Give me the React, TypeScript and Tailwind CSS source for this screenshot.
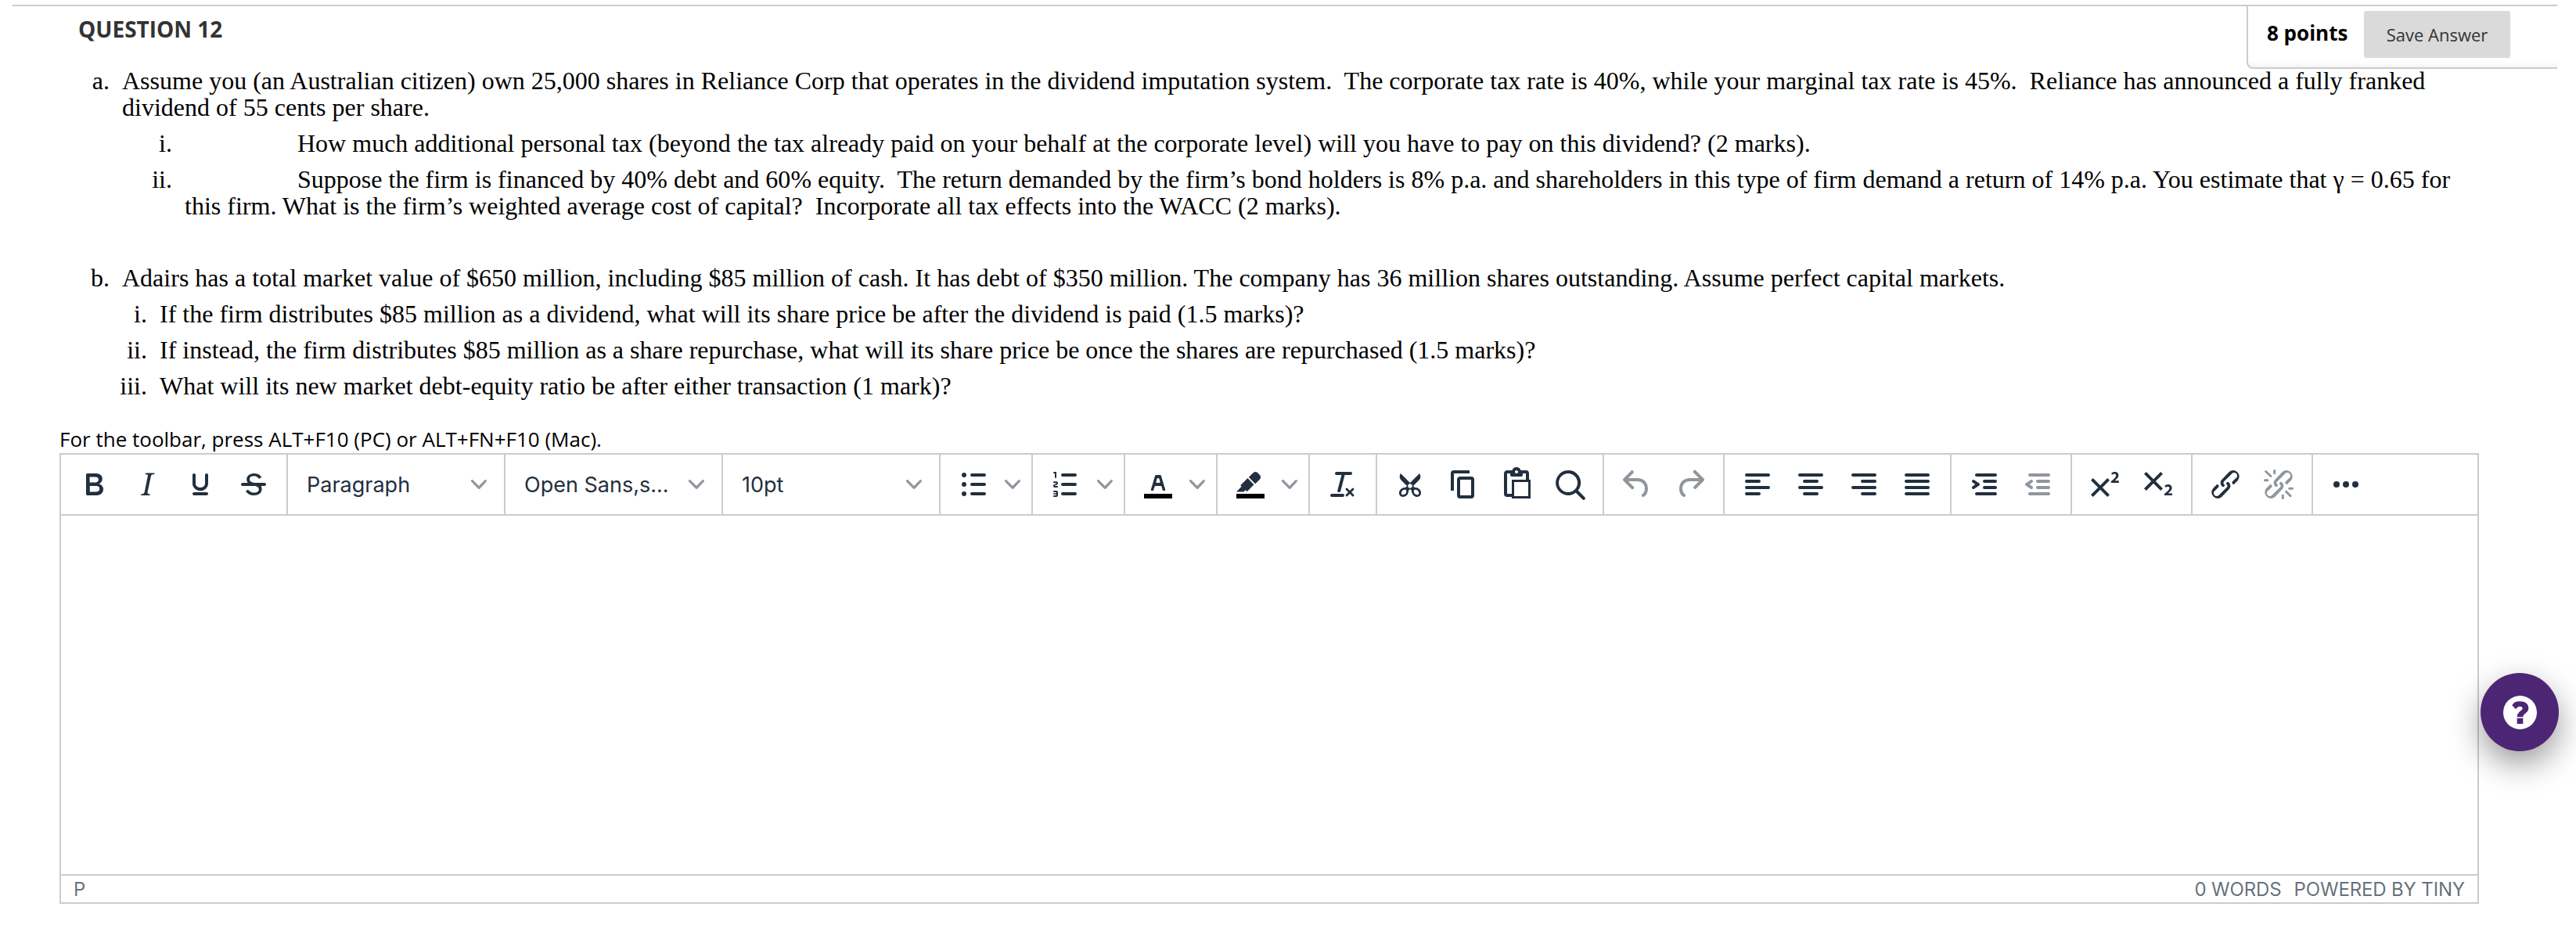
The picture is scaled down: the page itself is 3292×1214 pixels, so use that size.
import { ReactNode } from "react";
import clsx from "clsx";

const LINK =
  "M6.2 12.3a1 1 0 0 1 1.4 1.4l-2 2a2 2 0 1 0 2.6 2.8l4.8-4.8a1 1 0 0 0 0-1.4 1 1 0 1 1 1.4-1.3 2.9 2.9 0 0 1 0 4L9.6 20a3.9 3.9 0 0 1-5.5-5.5l2-2Zm11.6-.6a1 1 0 0 1-1.4-1.4l2-2a2 2 0 1 0-2.6-2.8L11 10.3a1 1 0 0 0 0 1.4A1 1 0 1 1 9.6 13a2.9 2.9 0 0 1 0-4L14.4 4a3.9 3.9 0 0 1 5.5 5.5l-2 2Z";

// Filled icon outlines on a 24x24 grid
const ICONS = {
  bold: "M7.8 19c-.3 0-.5 0-.6-.2l-.2-.5V5.7c0-.2 0-.4.2-.5l.6-.2h5c1.5 0 2.7.3 3.5 1 .7.6 1.1 1.4 1.1 2.5a3 3 0 0 1-.6 1.9c-.4.6-1 1-1.6 1.2.4.1.9.3 1.3.6s.8.7 1 1.2c.4.4.5 1 .5 1.6 0 1.3-.4 2.3-1.3 3-.8.7-2.1 1-3.8 1H7.8Zm5-8.3c.6 0 1.2-.1 1.6-.5.4-.3.6-.7.6-1.3 0-1.1-.8-1.7-2.3-1.7H9.3v3.5h3.4Zm.5 6c.7 0 1.3-.1 1.7-.4.4-.4.6-.9.6-1.5s-.2-1-.7-1.4c-.4-.3-1-.4-2-.4H9.4v3.8h4Z",
  italic:
    "m16.7 4.7-.1.9h-.3c-.6 0-1 0-1.4.3-.3.3-.4.6-.5 1.1l-2.1 9.8v.6c0 .5.4.8 1.4.8h.2l-.2.8H8l.2-.8h.2c1.1 0 1.8-.5 2-1.5l2-9.8.1-.5c0-.6-.4-.8-1.4-.8h-.3l.2-.9h5.8Z",
  underline:
    "M16 5c.6 0 1 .4 1 1v5.5a4 4 0 0 1-.4 1.8l-1 1.4a5.3 5.3 0 0 1-5.5 1 5 5 0 0 1-1.6-1c-.5-.4-.8-.9-1.1-1.4a4 4 0 0 1-.4-1.8V6c0-.6.4-1 1-1s1 .4 1 1v5.5c0 .3 0 .6.2 1l.6.7a3.3 3.3 0 0 0 2.2.8 3.4 3.4 0 0 0 2.2-.8c.3-.2.4-.5.6-.8l.2-.9V6c0-.6.4-1 1-1ZM8 17h8c.6 0 1 .4 1 1s-.4 1-1 1H8a1 1 0 0 1 0-2Z",
  strike:
    "M15.6 8.5c-.5-.7-1-1.1-1.3-1.3-.6-.4-1.3-.6-2-.6-2.7 0-2.8 1.7-2.8 2.1 0 1.6 1.8 2 3.2 2.3 4.4.9 4.6 2.8 4.6 3.9 0 1.4-.7 4.1-5 4.1A6.2 6.2 0 0 1 7 16.4l1.5-1.1c.4.6 1.6 2 3.7 2 1.6 0 2.5-.4 3-1.2.4-.8.3-2-.8-2.6-.7-.4-1.6-.7-2.9-1-1-.2-3.9-.8-3.9-3.6C7.6 6 10.3 5 12.4 5c2.9 0 4.2 1.6 4.7 2.4l-1.5 1.1Z",
  numbers:
    "M6 4v3.5c0 .3-.2.5-.5.5a.5.5 0 0 1-.5-.5V5h-.5a.5.5 0 0 1 0-1H6Zm-1 8.8.2.2h1.3c.3 0 .5.2.5.5s-.2.5-.5.5H4.9a1 1 0 0 1-.9-1V13c0-.4.3-.8.6-1l1.2-.4.2-.3a.2.2 0 0 0-.2-.2H4.5a.5.5 0 0 1-.5-.5c0-.3.2-.5.5-.5h1.6c.5 0 .9.4.9 1v.1c0 .4-.3.8-.6 1l-1.2.4-.2.3ZM7 17v2c0 .6-.4 1-1 1H4.5a.5.5 0 0 1 0-1h1.2c.2 0 .3-.1.3-.3 0-.2-.1-.3-.3-.3H4.4a.4.4 0 1 1 0-.8h1.3c.2 0 .3-.1.3-.3 0-.2-.1-.3-.3-.3H4.5a.5.5 0 1 1 0-1H6c.6 0 1 .4 1 1Z",
  textColor:
    "M8.7 16h-.8a.5.5 0 0 1-.5-.6l2.7-9c.1-.3.3-.4.5-.4h2.8c.2 0 .4.1.5.4l2.7 9a.5.5 0 0 1-.5.6h-.8a.5.5 0 0 1-.4-.4l-.7-2.2c0-.3-.3-.4-.5-.4h-3.4c-.2 0-.4.1-.5.4l-.7 2.2c0 .3-.2.4-.4.4Zm2.6-7.6-.6 2a.5.5 0 0 0 .5.6h1.6a.5.5 0 0 0 .5-.6l-.6-2c0-.3-.3-.4-.5-.4h-.4c-.2 0-.4.1-.5.4Z",
  highlight:
    "M7.7 16.7H3l3.3-3.3-.7-.8L10.2 8l4 4.1-4 4.2c-.2.2-.6.2-.8 0l-.6-.7-1.1 1.1ZM10.9 7.4l3-2.9a2 2 0 0 1 2.6 0L18 6c.7.7.7 2 0 2.7l-2.9 2.9-4.2-4.2Z",
  removeFormat:
    "M13.2 6a1 1 0 0 1 0 .2l-2.6 10a1 1 0 0 1-1 .8h-.2a.8.8 0 0 1-.8-1l2.6-10H8a1 1 0 1 1 0-2h9a1 1 0 0 1 0 2h-3.8ZM5 18h7a1 1 0 0 1 0 2H5a1 1 0 0 1 0-2Zm13 1.5L16.5 18 15 19.5a.7.7 0 0 1-1-1l1.5-1.5-1.5-1.5a.7.7 0 0 1 1-1l1.5 1.5 1.5-1.5a.7.7 0 0 1 1 1L17.5 17l1.5 1.5a.7.7 0 0 1-1 1Z",
  cut: "M18 15c.6.7 1 1.4 1 2.3 0 .8-.2 1.5-.7 2l-.8.5-1 .2c-.4 0-.8 0-1.2-.3a3.9 3.9 0 0 1-2.1-2.2c-.2-.5-.3-1-.2-1.5l-1-1-1 1c0 .5 0 1-.2 1.5-.1.5-.4 1-.9 1.4-.3.4-.7.6-1.2.8l-1.2.3c-.4 0-.7 0-1-.2-.3 0-.6-.3-.8-.5-.5-.5-.8-1.2-.7-2 0-.9.4-1.6 1-2.2A3.7 3.7 0 0 1 8.6 14H9l1-1-4-4-.5-1a3.3 3.3 0 0 1 0-2c0-.4.3-.7.5-1l6 6 6-6 .5 1a3.3 3.3 0 0 1 0 2c0 .4-.3.7-.5 1l-4 4 1 1h.5c.4 0 .8 0 1.2.3.5.2.9.4 1.2.8ZM9.5 17.2l.1-.4v-.7a1 1 0 0 0-.2-.5 1 1 0 0 0-.4-.2 1.6 1.6 0 0 0-.8 0 2.6 2.6 0 0 0-.8.3 2.5 2.5 0 0 0-.9 1.1l-.1.4v.7l.2.5.5.2h.7a2.5 2.5 0 0 0 .8-.3 2.8 2.8 0 0 0 1-1ZM12 14.4c.4 0 .7-.1 1-.4.3-.3.4-.6.4-1s-.1-.7-.4-1c-.3-.3-.6-.4-1-.4s-.7.1-1 .4c-.3.3-.4.6-.4 1s.1.7.4 1c.3.3.6.4 1 .4ZM14.5 17.2l-.1-.4v-.7a1 1 0 0 1 .2-.5 1 1 0 0 1 .4-.2 1.6 1.6 0 0 1 .8 0 2.6 2.6 0 0 1 .8.3 2.5 2.5 0 0 1 .9 1.1l.1.4v.7l-.2.5-.5.2h-.7a2.5 2.5 0 0 1-.8-.3 2.8 2.8 0 0 1-1-1Z",
  copy: "M16 3H6a2 2 0 0 0-2 2v11h2V5h10V3Zm1 4a2 2 0 0 1 2 2v10a2 2 0 0 1-2 2h-7a2 2 0 0 1-2-2V9c0-1.2.9-2 2-2h7Zm0 12V9h-7v10h7Z",
  paste:
    "M18 9V5h-2v1c0 .6-.4 1-1 1H9a1 1 0 0 1-1-1V5H6v13h3V9h9ZM9 20H6a2 2 0 0 1-2-2V5c0-1.1.9-2 2-2h3.2A3 3 0 0 1 12 1a3 3 0 0 1 2.8 2H18a2 2 0 0 1 2 2v4h1v12H9v-1Zm1.5-9.5v9h9v-9h-9ZM12 3a1 1 0 0 0-1 1c0 .5.4 1 1 1s1-.5 1-1-.4-1-1-1Z",
  search:
    "M16 17.3a8 8 0 1 1 1.4-1.4l4.3 4.4a1 1 0 0 1-1.4 1.4l-4.4-4.3Zm-5-.3a6 6 0 1 0 0-12 6 6 0 0 0 0 12Z",
  undo: "M6.4 8H12c3.7 0 6.2 2 6.8 5.1.6 2.7-.4 5.6-2.3 6.8a1 1 0 0 1-1-1.8c1.1-.6 1.8-2.7 1.4-4.6-.5-2.1-2.1-3.5-4.9-3.5H6.4l3.3 3.3a1 1 0 1 1-1.4 1.4l-5-5a1 1 0 0 1 0-1.4l5-5a1 1 0 0 1 1.4 1.4L6.4 8Z",
  redo: "M17.6 10H12c-2.8 0-4.4 1.4-4.9 3.5-.4 2 .3 4 1.4 4.6a1 1 0 1 1-1 1.8c-2-1.2-2.9-4.1-2.3-6.8.6-3 3-5.1 6.8-5.1h5.6l-3.3-3.3a1 1 0 1 1 1.4-1.4l5 5a1 1 0 0 1 0 1.4l-5 5a1 1 0 0 1-1.4-1.4l3.3-3.3Z",
  indent: "M4.4 13.2 6.2 12l-1.8-1.2a1 1 0 0 1 1.2-1.6l3 2a1 1 0 0 1 0 1.6l-3 2a1 1 0 1 1-1.2-1.6Z",
  outdent: "M8.6 13.2a1 1 0 0 1-1.2 1.6l-3-2a1 1 0 0 1 0-1.6l3-2a1 1 0 0 1 1.2 1.6L6.8 12l1.8 1.2Z",
  superscript:
    "M15 9.4 10.4 14l4.6 4.6-1.4 1.4L9 15.4 4.4 20 3 18.6 7.6 14 3 9.4 4.4 8 9 12.6 13.6 8 15 9.4Zm5.9 1.6h-5v-1l1-.8 1.7-1.6c.3-.5.5-.9.5-1.3 0-.3 0-.5-.2-.7-.2-.2-.5-.3-.9-.3l-.8.2-.7.4-.4-1.2c.2-.2.5-.4 1-.5.3-.2.8-.2 1.2-.2.8 0 1.4.2 1.8.6.4.4.6 1 .6 1.6 0 .5-.2 1-.5 1.5l-1.3 1.4-.6.5h2.6V11Z",
  subscript:
    "m10.4 10 4.6 4.6-1.4 1.4L9 11.4 4.4 16 3 14.6 7.6 10 3 5.4 4.4 4 9 8.6 13.6 4 15 5.4 10.4 10ZM21 19h-5v-1l1-.8 1.7-1.6c.3-.4.5-.8.5-1.2 0-.3 0-.6-.2-.7-.2-.2-.5-.3-.9-.3a2 2 0 0 0-.8.2l-.7.3-.4-1.1 1-.6 1.2-.2c.8 0 1.4.3 1.8.7.4.4.6.9.6 1.5s-.2 1.1-.5 1.6a8 8 0 0 1-1.3 1.3l-.6.6h2.6V19Z",
  link: LINK,
  unlink:
    LINK +
    "M7.6 6.3a.8.8 0 0 1-1 1.1L3.3 4.2a.7.7 0 1 1 1-1l3.2 3.1ZM5.1 8.6a.8.8 0 0 1 0 1.5H3a.8.8 0 0 1 0-1.5h2Zm5-3.5a.8.8 0 0 1-1.5 0V3a.8.8 0 0 1 1.5 0v2Zm6 11.8a.8.8 0 0 1 1-1l3.2 3.2a.8.8 0 0 1-1 1L16 17Zm-2.2 2a.8.8 0 0 1 1.5 0V21a.8.8 0 0 1-1.5 0V19Zm5-3.5a.7.7 0 1 1 0-1.5H21a.8.8 0 0 1 0 1.5h-2Z",
  more: "M6 10a2 2 0 1 0 0 4 2 2 0 0 0 0-4Zm6 0a2 2 0 1 0 0 4 2 2 0 0 0 0-4Zm6 0a2 2 0 1 0 0 4 2 2 0 0 0 0-4Z",
  bullets:
    "M6 4.5a1.5 1.5 0 1 0 0 3 1.5 1.5 0 0 0 0-3Zm0 6a1.5 1.5 0 1 0 0 3 1.5 1.5 0 0 0 0-3Zm0 6a1.5 1.5 0 1 0 0 3 1.5 1.5 0 0 0 0-3Z",
};

interface IconProps {
  name?: keyof typeof ICONS;
  // Round-capped rules, drawn as strokes
  lines?: string;
  // Colour swatch under the glyph
  swatch?: boolean;
}

function Icon({ name, lines, swatch }: IconProps) {
  return (
    <svg className="w-12 h-12 shrink-0" viewBox="0 0 24 24" fill="currentColor">
      {swatch && <path d="M3 18h18v3H3z" fill="#000" />}
      {name && <path fillRule="evenodd" d={ICONS[name]} />}
      {lines && <path d={lines} fill="none" stroke="currentColor" strokeWidth={2} strokeLinecap="round" />}
    </svg>
  );
}

function Chevron() {
  return (
    <svg className="w-5 h-5 shrink-0 opacity-50" viewBox="0 0 10 10" fill="currentColor">
      <path d="M8.7 2.2c.3-.3.8-.3 1 0 .4.4.4.9 0 1.2L5.7 7.8c-.3.3-.9.3-1.2 0L.2 3.4a.8.8 0 0 1 0-1.2c.3-.3.8-.3 1.1 0L5 6l3.7-3.8Z" />
    </svg>
  );
}

function Group({ children, last }: { children: ReactNode; last?: boolean }) {
  return (
    <div className={clsx("flex items-center px-2", !last && "border-r-2 border-[#ccc]")}>{children}</div>
  );
}

function ToolButton({ title, disabled, ...icon }: IconProps & { title: string; disabled?: boolean }) {
  return (
    <button
      title={title}
      disabled={disabled}
      className={clsx("w-[68px] h-[68px] flex items-center justify-center", disabled && "opacity-50")}
    >
      <Icon {...icon} />
    </button>
  );
}

function SplitButton({ title, ...icon }: IconProps & { title: string }) {
  return (
    <div className="flex items-center">
      <ToolButton title={title} {...icon} />
      <button className="w-8 h-[68px] flex items-center justify-center">
        <Chevron />
      </button>
    </div>
  );
}

function Select({ label }: { label: string }) {
  return (
    <button className="w-[260px] h-[68px] pl-4 pr-[14px] flex items-center justify-between text-[27px]">
      <span className="pt-0.5">{label}</span>
      <Chevron />
    </button>
  );
}

function Item({ marker, children, nested }: { marker: string; children: ReactNode; nested?: "wide" | "narrow" }) {
  return (
    <li className={clsx("flex", nested === "wide" && "pl-20", nested === "narrow" && "pl-12")}>
      <span className="w-16 mr-4 shrink-0 text-right">{marker}</span>
      <p className="whitespace-nowrap">{children}</p>
    </li>
  );
}

function Toolbar() {
  return (
    <div className="flex h-[78px] border-b-2 border-[#ccc]">
      <Group>
        <ToolButton title="Bold" name="bold" />
        <ToolButton title="Italic" name="italic" />
        <ToolButton title="Underline" name="underline" />
        <ToolButton title="Strikethrough" name="strike" lines="M5 12h14" />
      </Group>
      <Group>
        <Select label="Paragraph" />
      </Group>
      <Group>
        <Select label="Open Sans,s..." />
      </Group>
      <Group>
        <Select label="10pt" />
      </Group>
      <Group>
        <SplitButton title="Bullet list" name="bullets" lines="M11 6h8M11 12h8M11 18h8" />
      </Group>
      <Group>
        <SplitButton title="Numbered list" name="numbers" lines="M10 6h8M10 12h8M10 18h8" />
      </Group>
      <Group>
        <SplitButton title="Text color" name="textColor" swatch />
      </Group>
      <Group>
        <SplitButton title="Background color" name="highlight" swatch />
      </Group>
      <Group>
        <ToolButton title="Clear formatting" name="removeFormat" />
      </Group>
      <Group>
        <ToolButton title="Cut" name="cut" />
        <ToolButton title="Copy" name="copy" />
        <ToolButton title="Paste" name="paste" />
        <ToolButton title="Find and replace" name="search" />
      </Group>
      <Group>
        <ToolButton title="Undo" name="undo" disabled />
        <ToolButton title="Redo" name="redo" disabled />
      </Group>
      <Group>
        <ToolButton title="Align left" lines="M5 6h14M5 10h8M5 14h14M5 18h8" />
        <ToolButton title="Align center" lines="M5 6h14M8 10h8M5 14h14M8 18h8" />
        <ToolButton title="Align right" lines="M5 6h14M11 10h8M5 14h14M11 18h8" />
        <ToolButton title="Justify" lines="M5 6h14M5 10h14M5 14h14M5 18h14" />
      </Group>
      <Group>
        <ToolButton title="Increase indent" name="indent" lines="M7 6h12M12 10h7M12 14h7M7 18h12" />
        <ToolButton title="Decrease indent" name="outdent" lines="M7 6h12M12 10h7M12 14h7M7 18h12" disabled />
      </Group>
      <Group>
        <ToolButton title="Superscript" name="superscript" />
        <ToolButton title="Subscript" name="subscript" />
      </Group>
      <Group>
        <ToolButton title="Insert link" name="link" />
        <ToolButton title="Remove link" name="unlink" disabled />
      </Group>
      <Group last>
        <ToolButton title="More" name="more" />
      </Group>
    </div>
  );
}

export default function App() {
  return (
    <div className="h-[1214px] bg-white pt-1.5 overflow-hidden text-black font-['Open_Sans',sans-serif]">
      <header className="ml-4 mr-6 h-20 border-t-2 border-[#ccc] flex items-start justify-between">
        <h3 className="mt-[10px] ml-[84px] text-[28px] leading-[38px] font-bold text-[#333]">QUESTION 12</h3>
        <div className="w-[397px] h-20 shrink-0 flex items-start pl-6 border-l-2 border-b-2 border-[#ccc] rounded-bl-lg shadow-[inset_0_-6px_8px_-6px_rgba(0,0,0,0.1)]">
          <span className="mt-4 w-[124px] text-[26px] leading-9 font-bold">8 points</span>
          <button className="mt-1.5 w-[187px] h-[60px] pb-px rounded-[3px] bg-[#dadada] text-[22px] leading-[30px] text-[#333]">
            Save Answer
          </button>
        </div>
      </header>

      <main className="pl-[76px]">
        <ol className="h-[457px] flex flex-col gap-3 font-['Liberation_Serif',serif] text-[32px] leading-[34px] tracking-[0.006px]">
          <Item marker="a.">
            Assume you (an Australian citizen) own 25,000 shares in Reliance Corp that operates in the dividend
            imputation system.&nbsp; The corporate tax rate is 40%, while your marginal tax rate is 45%.&nbsp;
            Reliance has announced a fully franked
            <br />
            dividend of 55 cents per share.
          </Item>
          <Item marker="i." nested="wide">
            <span className="pl-36">
              How much additional personal tax (beyond the tax already paid on your behalf at the corporate level)
              will you have to pay on this dividend? (2 marks).
            </span>
          </Item>
          <Item marker="ii." nested="wide">
            <span className="pl-36">
              Suppose the firm is financed by 40% debt and 60% equity.&nbsp; The return demanded by the firm’s bond
              holders is 8% p.a. and shareholders in this type of firm demand a return of 14% p.a. You estimate that
              γ = 0.65 for
            </span>
            <br />
            this firm. What is the firm’s weighted average cost of capital?&nbsp; Incorporate all tax effects into
            the WACC (2 marks).
          </Item>
          <li className="h-[34px]" />
          <Item marker="b.">
            Adairs has a total market value of $650 million, including $85 million of cash. It has debt of $350
            million. The company has 36 million shares outstanding. Assume perfect capital markets.
          </Item>
          <Item marker="i." nested="narrow">
            If the firm distributes $85 million as a dividend, what will its share price be after the dividend is
            paid (1.5 marks)?
          </Item>
          <Item marker="ii." nested="narrow">
            If instead, the firm distributes $85 million as a share repurchase, what will its share price be once
            the shares are repurchased (1.5 marks)?
          </Item>
          <Item marker="iii." nested="narrow">
            What will its new market debt-equity ratio be after either transaction (1 mark)?
          </Item>
        </ol>

        <p className="text-[26px] leading-9">For the toolbar, press ALT+F10 (PC) or ALT+FN+F10 (Mac).</p>

        <div className="w-[3092px] h-[576px] flex flex-col border-2 border-[#ccc] font-[Inter,sans-serif] text-[#222f3e]">
          <Toolbar />
          <div className="flex-1" />
          <div className="h-9 px-4 pt-0.5 flex items-center border-t-2 border-[#ccc] text-[24px] leading-none tracking-[-0.15px] text-[#222f3e]/70">
            <span className="flex-1">P</span>
            <span className="mr-4">0 WORDS</span>
            <span>POWERED BY TINY</span>
          </div>
        </div>
      </main>

      <button
        title="Help"
        className="fixed right-[22px] top-[860px] w-[100px] h-[100px] rounded-full bg-[#4c2675] flex items-center justify-center shadow-[0_16px_40px_rgba(0,0,0,0.4)]"
      >
        <svg className="w-[43px] h-[43px]" viewBox="0 0 129 129">
          <circle cx="64.5" cy="64.5" r="64.5" fill="#fff" />
          <path
            d="M34 37C40 26 50 22 64 22c20 0 33 10 33 26 0 18-21 20-21 34H53c0-20 21-24 21-33 0-5-4-8-10-8s-11 4-16 11ZM53 86h23v22H53Z"
            fill="#4c2675"
          />
        </svg>
      </button>
    </div>
  );
}
